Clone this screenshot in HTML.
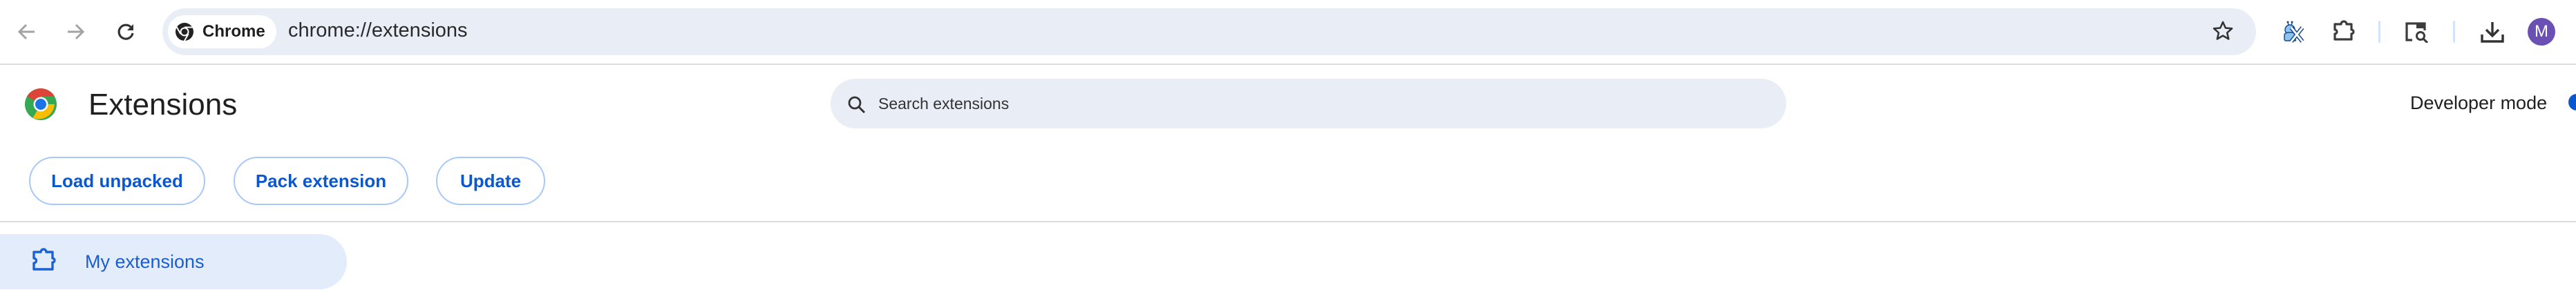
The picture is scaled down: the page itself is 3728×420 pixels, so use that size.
<!DOCTYPE html>
<html><head><meta charset="utf-8"><style>
*{margin:0;padding:0;box-sizing:border-box}
body{width:3728px;height:420px;background:#fff;position:relative;overflow:hidden;font-family:"Liberation Sans",Arial,sans-serif}
.a{position:absolute}
.t{white-space:nowrap;line-height:1}
.btn{position:absolute;top:227px;height:70px;border:2px solid #a8c7fa;border-radius:35px;color:#0b57d0;font-size:26px;font-weight:bold;display:flex;align-items:center;justify-content:center}
</style></head><body>
<!-- toolbar -->
<svg class="a" style="left:24px;top:32px" width="28" height="28" viewBox="0 0 28 28"><path d="M26 14H4M14 4L4 14l10 10" stroke="#a3a3a3" stroke-width="3" fill="none"/></svg>
<svg class="a" style="left:96px;top:32px" width="28" height="28" viewBox="0 0 28 28"><path d="M2 14h22M14 4l10 10-10 10" stroke="#a3a3a3" stroke-width="3" fill="none"/></svg>
<svg class="a" style="left:168px;top:32px" width="28" height="28" viewBox="0 0 28 28"><path d="M22 8A10 10 0 1 0 24 16" stroke="#333" stroke-width="3.2" fill="none"/><path d="M25 3v9h-9z" fill="#333"/></svg>
<div class="a" style="left:235px;top:12px;width:3030px;height:68px;border-radius:34px;background:#e9eef6"></div>
<div class="a" style="left:243px;top:22px;width:157px;height:48px;border-radius:24px;background:#fff"></div>
<svg class="a" style="left:253px;top:32px" width="28" height="28" viewBox="0 0 28 28"><circle cx="14" cy="14" r="13" fill="#222"/><circle cx="14" cy="14" r="6.5" fill="#fff"/><circle cx="14" cy="14" r="4.5" fill="#222"/><path d="M14 7.5h12M8.4 17.2L2.6 7M19.6 17.2l-6 10.4" stroke="#fff" stroke-width="2"/></svg>
<div class="a t" style="left:293px;top:34px;font-size:24px;font-weight:bold;color:#1f1f1f">Chrome</div>
<div class="a t" style="left:417px;top:30px;font-size:29px;color:#2a2a2a">chrome://extensions</div>
<svg class="a" style="left:3200px;top:28px" width="34" height="34" viewBox="0 0 24 24"><path d="M12 2.8l2.7 6 6.5.6-4.9 4.3 1.5 6.4L12 16.7 6.2 20.1l1.5-6.4-4.9-4.3 6.5-.6z" fill="none" stroke="#333" stroke-width="1.8" stroke-linejoin="round"/></svg>
<svg class="a" style="left:3300px;top:27px" width="36" height="36" viewBox="0 0 36 36"><path d="M11 6l2 5M17 6l-1 5" stroke="#1a4c8c" stroke-width="1.5"/><circle cx="11" cy="5" r="1.5" fill="#1a4c8c"/><circle cx="17" cy="5" r="1.5" fill="#1a4c8c"/><circle cx="14" cy="16" r="7" fill="#8ec5f0" stroke="#1a4c8c" stroke-width="1.5"/><path d="M6 24q0-4 8-4 8 0 8 4v8H8q-2 0-2-3z" fill="#8ec5f0" stroke="#1a4c8c" stroke-width="1.5"/><path d="M16 13l16 20M32 13L16 33" stroke="#1a4c8c" stroke-width="6"/><path d="M16 13l16 20M32 13L16 33" stroke="#fff" stroke-width="3"/></svg>
<svg class="a" style="left:3375px;top:28px" width="34" height="34" viewBox="0 0 34 34"><path d="M4 7h9a4 4 0 0 1 8 0h7v8a3 3 0 0 1 0 6v8H4v-8a3 3 0 0 0 0-6z" fill="none" stroke="#3c3c3c" stroke-width="3.2" stroke-linejoin="round"/></svg>
<div class="a" style="left:3442px;top:30px;width:3px;height:32px;background:#d3e3fd;border-radius:2px"></div>
<svg class="a" style="left:3481px;top:32px" width="36" height="30" viewBox="0 0 36 30"><path d="M10 26H2V2h26v10" fill="none" stroke="#3c3c3c" stroke-width="3.2"/><rect x="16" y="1" width="13" height="8" fill="#3c3c3c"/><circle cx="22" cy="20" r="5.5" fill="none" stroke="#3c3c3c" stroke-width="3"/><path d="M26 24l6 6" stroke="#3c3c3c" stroke-width="3.2"/></svg>
<div class="a" style="left:3550px;top:30px;width:3px;height:32px;background:#d3e3fd;border-radius:2px"></div>
<svg class="a" style="left:3590px;top:30px" width="34" height="32" viewBox="0 0 34 32"><path d="M17 2v19M8 13l9 9 9-9" fill="none" stroke="#333" stroke-width="3.4"/><path d="M2 20v10h30V20" fill="none" stroke="#333" stroke-width="3.4"/></svg>
<div class="a" style="left:3658px;top:26px;width:40px;height:40px;border-radius:50%;background:#6b50b4;color:#fff;font-size:24px;text-align:center;line-height:40px">M</div>
<div class="a" style="left:0;top:92px;width:3728px;height:2px;background:#dcdcdc"></div>
<!-- header -->
<svg class="a" style="left:36px;top:128px" width="46" height="46" viewBox="0 0 46 46"><circle cx="23" cy="23" r="23" fill="#34a853"/><path d="M23 23L3.1 11.5A23 23 0 0 1 42.9 11.5H23z" fill="#db4437"/><path d="M23 23h19.9A23 23 0 0 1 11.5 42.9z" fill="#fbbc04"/><path d="M23 23L3.1 11.5" stroke="#db4437" stroke-width="0"/><circle cx="23" cy="23" r="10.5" fill="#fff"/><circle cx="23" cy="23" r="8" fill="#1a73e8"/></svg>
<div class="a t" style="left:128px;top:130px;font-size:44px;color:#1f1f1f">Extensions</div>
<div class="a" style="left:1202px;top:114px;width:1383px;height:72px;border-radius:36px;background:#e9eef6"></div>
<svg class="a" style="left:1226px;top:138px" width="28" height="28" viewBox="0 0 28 28"><circle cx="11" cy="11" r="8" fill="none" stroke="#333" stroke-width="2.8"/><path d="M17 17l8 8" stroke="#333" stroke-width="3"/></svg>
<div class="a t" style="left:1271px;top:139px;font-size:23px;color:#333">Search extensions</div>
<div class="a t" style="left:3488px;top:136px;font-size:27px;color:#1f1f1f">Developer mode</div>
<div class="a" style="left:3717px;top:136px;width:24px;height:24px;border-radius:50%;background:#0b57d0"></div>
<div class="btn" style="left:42px;width:255px">Load unpacked</div>
<div class="btn" style="left:338px;width:253px">Pack extension</div>
<div class="btn" style="left:631px;width:158px">Update</div>
<div class="a" style="left:0;top:320px;width:3728px;height:2px;background:#dcdcdc"></div>
<div class="a" style="left:-40px;top:339px;width:542px;height:80px;border-radius:40px;background:#e3ecfb"></div>
<svg class="a" style="left:46px;top:359px" width="36" height="34" viewBox="0 0 36 34"><path d="M3 6h10a4 4 0 0 1 8 0h9v9a3 3 0 0 1 0 6v10H3v-9a3 3 0 0 0 0-7z" fill="none" stroke="#1a62d6" stroke-width="3.4" stroke-linejoin="round"/></svg>
<div class="a t" style="left:123px;top:366px;font-size:27px;color:#1a5dcf">My extensions</div>
</body></html>
